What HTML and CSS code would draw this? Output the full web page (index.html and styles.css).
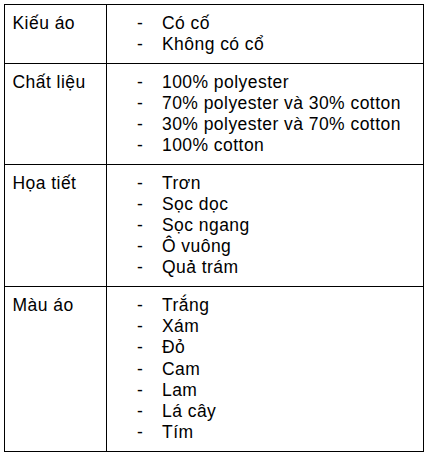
FILE: index.html
```html
<!DOCTYPE html>
<html lang="vi">
<head>
<meta charset="utf-8">
<link rel="stylesheet" href="styles.css">
</head>
<body>
<table class="grid">
  <tr>
    <td class="label">Kiếu áo</td>
    <td class="items">
      <ul class="list">
        <li>Có cố</li>
        <li>Không có cổ</li>
      </ul>
    </td>
  </tr>
  <tr>
    <td class="label">Chất liệu</td>
    <td class="items">
      <ul class="list">
        <li>100% polyester</li>
        <li>70% polyester và 30% cotton</li>
        <li>30% polyester và 70% cotton</li>
        <li>100% cotton</li>
      </ul>
    </td>
  </tr>
  <tr>
    <td class="label">Họa tiết</td>
    <td class="items">
      <ul class="list">
        <li>Trơn</li>
        <li>Sọc dọc</li>
        <li>Sọc ngang</li>
        <li>Ô vuông</li>
        <li>Quả trám</li>
      </ul>
    </td>
  </tr>
  <tr>
    <td class="label">Màu áo</td>
    <td class="items">
      <ul class="list">
        <li>Trắng</li>
        <li>Xám</li>
        <li>Đỏ</li>
        <li>Cam</li>
        <li>Lam</li>
        <li>Lá cây</li>
        <li>Tím</li>
      </ul>
    </td>
  </tr>
</table>
</body>
</html>
```
FILE: styles.css
```css
html, body {
  margin: 0;
  padding: 0;
  background: #fff;
}
body {
  padding: 4px 0 0 4px;
  font-family: "Liberation Sans", Arial, sans-serif;
  font-size: 17.5px;
  line-height: 21.1px;
  letter-spacing: 0.45px;
  color: #000;
}
.grid {
  border-collapse: collapse;
  width: 420px;
  table-layout: fixed;
}
.grid td {
  border: 1px solid #000;
  vertical-align: top;
  padding: 7.9px 0 7.9px 0;
}
.grid td.label {
  width: 102px;
  padding-left: 7.5px;
  box-sizing: border-box;
}
.grid td.items {
  padding-left: 30px;
}
.list {
  list-style: none;
  margin: 0;
  padding: 0;
}
.list li {
  display: flex;
}
.list li::before {
  content: "-";
  width: 25px;
  flex: none;
}
```
